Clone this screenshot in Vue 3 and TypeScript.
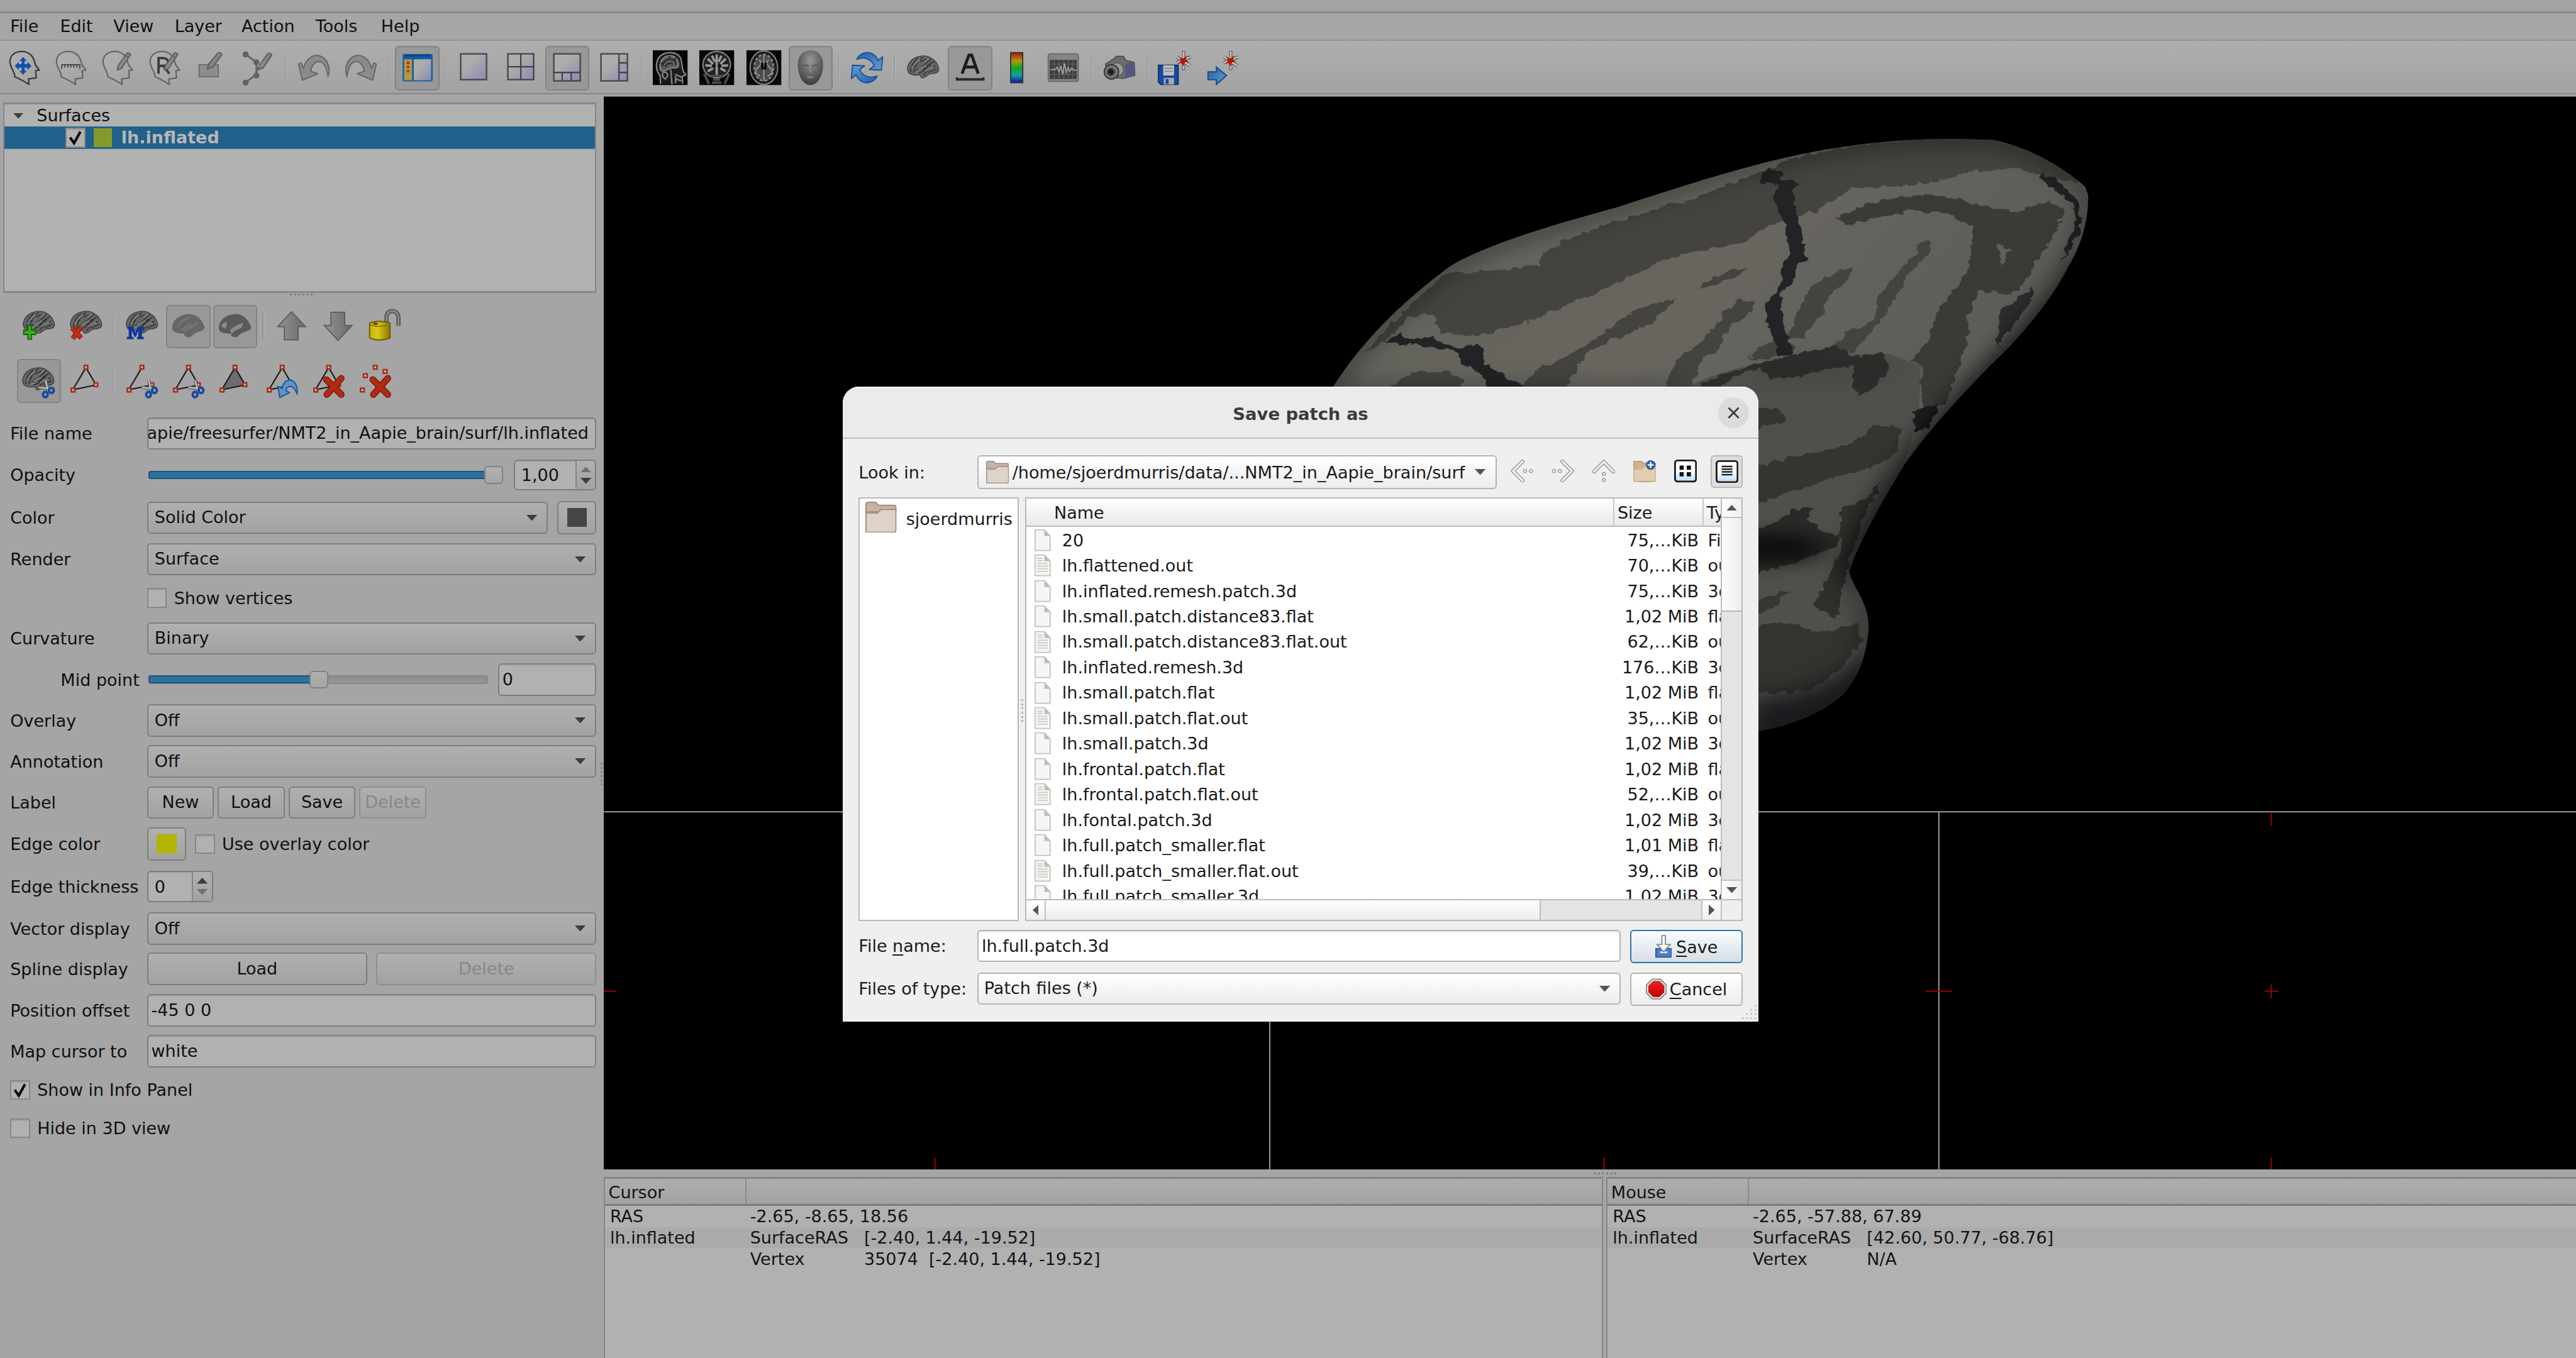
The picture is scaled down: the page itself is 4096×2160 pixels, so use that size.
<script setup lang="ts">
interface FileRow { name: string; size: string; type: string; text?: boolean }
interface Tool { icon?: string; on?: boolean; sep?: boolean }

const menus = [
  { label: 'File', w: 83 }, { label: 'Edit', w: 89 }, { label: 'View', w: 102 },
  { label: 'Layer', w: 111.5 }, { label: 'Action', w: 123.5 }, { label: 'Tools', w: 109 },
  { label: 'Help', w: 100 },
]

const sep: Tool = { sep: true }
const tools: Tool[] = [
  { icon: 'nav' }, { icon: 'ruler' }, { icon: 'headpen' }, { icon: 'recon' }, { icon: 'boxpen' }, { icon: 'spline' }, sep,
  { icon: 'undo' }, { icon: 'redo' }, sep,
  { icon: 'panel', on: true }, sep,
  { icon: 'one' }, { icon: 'four' }, { icon: 'onethree', on: true }, { icon: 'oneside' }, sep,
  { icon: 'sag' }, { icon: 'cor' }, { icon: 'axi' }, { icon: 'face', on: true }, sep,
  { icon: 'refresh' }, sep,
  { icon: 'brain' }, { icon: 'annot', on: true }, { icon: 'cbar' }, { icon: 'graph' }, sep,
  { icon: 'camera' }, sep,
  { icon: 'savept' }, { icon: 'gotopt' },
]
const surfTools: Tool[] = [
  { icon: 'badd' }, { icon: 'bdel' }, sep,
  { icon: 'bm' }, { icon: 'bsmooth', on: true }, { icon: 'binfl', on: true }, sep,
  { icon: 'up' }, { icon: 'down' }, { icon: 'lock' },
]
const pathTools: Tool[] = [
  { icon: 'bcut', on: true }, { icon: 'tri' }, sep,
  { icon: 'tricutopen' }, { icon: 'tricut' }, { icon: 'trifill' }, { icon: 'triundo' }, { icon: 'tridel' }, { icon: 'dotsdel' },
]

const files: FileRow[] = [
  { name: '20', size: '75,…KiB', type: 'File' },
  { name: 'lh.flattened.out', size: '70,…KiB', type: 'out', text: true },
  { name: 'lh.inflated.remesh.patch.3d', size: '75,…KiB', type: '3d' },
  { name: 'lh.small.patch.distance83.flat', size: '1,02 MiB', type: 'flat' },
  { name: 'lh.small.patch.distance83.flat.out', size: '62,…KiB', type: 'out', text: true },
  { name: 'lh.inflated.remesh.3d', size: '176…KiB', type: '3d' },
  { name: 'lh.small.patch.flat', size: '1,02 MiB', type: 'flat' },
  { name: 'lh.small.patch.flat.out', size: '35,…KiB', type: 'out', text: true },
  { name: 'lh.small.patch.3d', size: '1,02 MiB', type: '3d' },
  { name: 'lh.frontal.patch.flat', size: '1,02 MiB', type: 'flat' },
  { name: 'lh.frontal.patch.flat.out', size: '52,…KiB', type: 'out', text: true },
  { name: 'lh.fontal.patch.3d', size: '1,02 MiB', type: '3d' },
  { name: 'lh.full.patch_smaller.flat', size: '1,01 MiB', type: 'flat' },
  { name: 'lh.full.patch_smaller.flat.out', size: '39,…KiB', type: 'out', text: true },
  { name: 'lh.full.patch_smaller.3d', size: '1,02 MiB', type: '3d' },
]

const info = [
  { title: 'Cursor', ras: '-2.65, -8.65, 18.56', sras: '[-2.40, 1.44, -19.52]', vertex: '35074  [-2.40, 1.44, -19.52]' },
  { title: 'Mouse', ras: '-2.65, -57.88, 67.89', sras: '[42.60, 50.77, -68.76]', vertex: 'N/A' },
]
</script>

<template>
  <div class="app">
    <!-- icon sheet -->
    <svg class="sheet" width="0" height="0">
      <defs>
        <linearGradient id="gHead" x1="0" y1="0" x2="1" y2="1"><stop offset="0" stop-color="#b2b2b2" /><stop offset="1" stop-color="#a2a2a2" /></linearGradient>
        <linearGradient id="gPane" x1="0" y1="0" x2="1" y2="1"><stop offset=".35" stop-color="#adadad" /><stop offset="1" stop-color="#8a8ab4" /></linearGradient>
        <linearGradient id="gArr" x1="0" y1="0" x2="1" y2="0"><stop offset="0" stop-color="#939393" /><stop offset="1" stop-color="#6a6a6a" /></linearGradient>
        <linearGradient id="gBlue" x1="0" y1="0" x2="1" y2="1"><stop offset="0" stop-color="#1c5fa8" /><stop offset="1" stop-color="#6c9ccc" /></linearGradient>
        <linearGradient id="gRain" x1="0" y1="0" x2="0" y2="1"><stop offset="0" stop-color="#b01010" /><stop offset=".28" stop-color="#b09a10" /><stop offset=".5" stop-color="#10a818" /><stop offset=".75" stop-color="#10a0a0" /><stop offset="1" stop-color="#1010b0" /></linearGradient>
        <linearGradient id="gLock" x1="0" y1="0" x2="1" y2="0"><stop offset="0" stop-color="#c8b400" /><stop offset=".4" stop-color="#d8c820" /><stop offset="1" stop-color="#8a7400" /></linearGradient>
        <linearGradient id="gRed" x1="0" y1="0" x2="0" y2="1"><stop offset="0" stop-color="#ef2020" /><stop offset="1" stop-color="#c00000" /></linearGradient>
        <linearGradient id="gWB" x1="0" y1="0" x2="0" y2="1"><stop offset=".5" stop-color="#fff" /><stop offset="1" stop-color="#b8dcff" /></linearGradient>
        <radialGradient id="gFace" cx=".5" cy=".3" r=".7"><stop offset="0" stop-color="#989898" /><stop offset="1" stop-color="#3c3c3c" /></radialGradient>
        <radialGradient id="gLens"><stop offset="0" stop-color="#15154a" /><stop offset=".5" stop-color="#222" /><stop offset="1" stop-color="#777" /></radialGradient>
      </defs>

      <symbol id="s-head" viewBox="0 0 60 60">
        <path d="M14 45C15 37 6 31 6 19 7 8 16 3 26 3 39 3 45 12 47 20L49 26 55 34 49 35 50 47 37 49 38 58C32 54 25 50 14 45Z" fill="url(#gHead)" stroke="currentColor" stroke-width="2.4" stroke-linejoin="round" />
      </symbol>
      <symbol id="s-pencil" viewBox="0 0 60 60">
        <path d="M30 34L31 27 46 6Q49 4 52 8L37 31Z" fill="#8a8a8a" stroke="#5c5c5c" stroke-width="2" stroke-linejoin="round" /><path d="M44 10L49 14" stroke="#606060" stroke-width="2" />
      </symbol>
      <symbol id="i-nav" viewBox="0 0 60 60">
        <use href="#s-head" color="#383838" />
        <path d="M28 12L34 19H30.500V24H35V20.500L42 27 35 34V30H30.500V35H34L28 42 22 35H25.500V30H21V34L14 27 21 20.500V24H25.500V19H22Z" fill="#1150a8" />
      </symbol>
      <symbol id="i-ruler" viewBox="0 0 60 60"><use href="#s-head" color="#666" /><path d="M15 32V25H45V32M20 25V30M25 25V30M30 25V30M35 25V30M40 25V30" fill="none" stroke="#444" stroke-width="2" /></symbol>
      <symbol id="i-headpen" viewBox="0 0 60 60"><use href="#s-head" color="#666" /><use href="#s-pencil" /></symbol>
      <symbol id="i-recon" viewBox="0 0 60 60"><use href="#s-head" color="#666" /><path d="M20 40V14H28Q36 15 36 21 36 27 28 27H20M28 27L38 40" fill="none" stroke="#3c3c3c" stroke-width="4" /><use href="#s-pencil" /></symbol>
      <symbol id="i-boxpen" viewBox="0 0 60 60"><path d="M10 25H42V45H10Z" fill="#8e8e8e" stroke="#6c6c6c" stroke-width="2" /><path d="M24 32L26 24 41 6Q45 3 48 8L33 29Z" fill="#858585" stroke="#5c5c5c" stroke-width="2" /></symbol>
      <symbol id="i-spline" viewBox="0 0 60 60"><path d="M9 8L27 21 27 41 9 55M28 34L32 27 46 7Q50 5 52 9L38 30Z" fill="none" stroke="#636363" stroke-width="3" /><path d="M32 30L49 8" stroke="#858585" stroke-width="4" /><g fill="#626262"><circle cx="9" cy="8" r="5" /><circle cx="27" cy="21" r="5" /><circle cx="27" cy="43" r="5" /><circle cx="9" cy="55" r="5" /></g></symbol>
      <symbol id="i-undo" viewBox="0 0 60 60"><path d="M4 24L8 22 12 31C17 14 28 8 38 10 52 13 58 31 53 45 51 31 47 20 38 20 30 20 25 28 24 36L36 40 10 51Z" fill="#8b8b8b" stroke="#646464" stroke-width="2" stroke-linejoin="round" /></symbol>
      <symbol id="i-redo" viewBox="0 0 60 60"><g transform="matrix(-1 0 0 1 60 0)"><use href="#i-undo" width="60" height="60" /></g></symbol>
      <symbol id="i-panel" viewBox="0 0 60 60"><rect x="5.500" y="7" width="50" height="46" rx="3" fill="#0f5fa0" /><rect x="8" y="16" width="13" height="35" fill="#b09a48" /><rect x="24" y="16" width="29" height="35" fill="url(#gPane)" /><path d="M14.500 20V41" stroke="#b03c10" stroke-width="5" stroke-dasharray="4 3" /><path d="M9 10H52" stroke="#0a3d80" stroke-width="2" /></symbol>
      <symbol id="i-one" viewBox="0 0 60 60"><rect x="9" y="7" width="43" height="43" fill="url(#gPane)" stroke="#444" stroke-width="2.400" /></symbol>
      <symbol id="i-four" viewBox="0 0 60 60"><path d="M9 7H52V50H9ZM30.500 7V50M9 28.500H52" fill="url(#gPane)" stroke="#444" stroke-width="2.400" /></symbol>
      <symbol id="i-onethree" viewBox="0 0 60 60"><path d="M8 7H52V52H8ZM8 38H52M22 38V52M37 38V52" fill="url(#gPane)" stroke="#444" stroke-width="2.400" /></symbol>
      <symbol id="i-oneside" viewBox="0 0 60 60"><path d="M8 7H52V52H8ZM38 7V52M38 22H52M38 38H52" fill="url(#gPane)" stroke="#444" stroke-width="2.400" /></symbol>
      <symbol id="i-sag" viewBox="0 0 60 60"><rect x="1" y="1" width="58" height="58" fill="#050505" /><path d="M14 57L13 43C5 34 5 20 13 11 23 2 40 3 47 13 50 19 49 29 52 36L56 42 50 45 51 57" fill="#1c1c1c" stroke="#8c8c8c" stroke-width="2.200" /><path d="M13 30C12 18 20 10 29 10 39 10 45 18 44 27 41 33 36 29 30 31L22 35C16 37 13 35 13 30Z" fill="#5c5c5c" stroke="#888" stroke-width="2" /><path d="M17 28Q20 16 30 16T39 25M22 29Q25 20 34 24M19 21L14 24M29 16V10M36 18L40 14" fill="none" stroke="#262626" stroke-width="2.200" /><path d="M18 38Q25 36 26 43L22 49Q15 45 18 38M31 33L33 58M38 41L49 46M39 49L49 52M39 56V44" fill="none" stroke="#808080" stroke-width="2.500" /></symbol>
      <symbol id="i-cor" viewBox="0 0 60 60"><rect x="1" y="1" width="58" height="58" fill="#050505" /><ellipse cx="30" cy="25" rx="23" ry="22" fill="#222" stroke="#858585" stroke-width="2.200" /><path d="M30 8V42M15 15L24 24M45 15L36 24M11 26L22 27M49 26L38 27M15 36L24 31M45 36L36 31M22 10L27 20M38 10L33 20" stroke="#999" stroke-width="4" /><path d="M24 24L28 28M36 24L32 28" stroke="#111" stroke-width="3" /><path d="M9 40L17 57M51 40L43 57M20 44H40M24 50H36M22 55H38" stroke="#4c4c4c" stroke-width="4" /></symbol>
      <symbol id="i-axi" viewBox="0 0 60 60"><rect x="1" y="1" width="58" height="58" fill="#050505" /><ellipse cx="30" cy="30" rx="23" ry="28" fill="#1b1b1b" stroke="#808080" stroke-width="2.200" /><ellipse cx="30" cy="30" rx="16" ry="22" fill="#4c4c4c" stroke="#848484" stroke-width="3" stroke-dasharray="5 3" /><path d="M30 8V52M22 17Q29 22 20 30T24 44M38 17Q31 22 40 30T36 44" fill="none" stroke="#909090" stroke-width="2.200" /><path d="M27 22L28 33M33 22L32 33" stroke="#060606" stroke-width="4" /></symbol>
      <symbol id="i-face" viewBox="0 0 60 60"><path d="M30 1C44 1 51 12 51 25 51 44 42 59 30 59S9 44 9 25C9 12 16 1 30 1Z" fill="url(#gFace)" /><path d="M17 27Q22 24 27 28M33 28Q38 24 43 27" stroke="#555" stroke-width="2" fill="none" /><path d="M30 27V39M25 46H35" stroke="#858585" stroke-width="3" /></symbol>
      <symbol id="i-refresh" viewBox="0 0 60 60"><path id="halfRefresh" d="M13 16C18 5 33 1 43 10 47 14 48 18 48 18L56 12 54 34 34 33 42 27C38 16 26 11 13 16Z" fill="url(#gBlue)" stroke="#14549a" stroke-width="2" stroke-linejoin="round" /><use href="#halfRefresh" transform="rotate(180 30 30)" /></symbol>
      <symbol id="i-brain" viewBox="0 0 60 60">
        <path d="M4 33C4 26 8 18 16 14 25 9 38 9 45 15 52 19 57 28 56 35 54 40 48 39 43 40 36 42 34 48 28 47 25 46 27 43 24 42 17 43 9 42 6 38Z" fill="#666" stroke="#3f3f3f" stroke-width="1.500" />
        <path d="M9 37Q11 22 22 14M15 38Q15 24 30 12M19 34L32 26 43 15M22 39Q34 37 38 26L48 20M31 43Q38 32 51 27M39 38L53 32M25 20L36 16M12 28L20 26M30 33L43 25" fill="none" stroke="#333" stroke-width="1.800" /><path d="M11 32Q17 22 25 16M22 33L35 26M33 36L47 29M18 38L23 36M33 20L40 15" stroke="#8e8e8e" stroke-width="1.800" fill="none" />
      </symbol>
      <symbol id="i-annot" viewBox="0 0 60 60"><path d="M16.500 40L28 9H32.500L43.500 40M21 29H39" fill="none" stroke="#1c1c1c" stroke-width="5" /><path d="M8 46V49.500H52V46" fill="none" stroke="#2a2a2a" stroke-width="4" /></symbol>
      <symbol id="i-cbar" viewBox="0 0 60 60"><rect x="20" y="5" width="20" height="50" fill="url(#gRain)" stroke="#333" stroke-width="2" /></symbol>
      <symbol id="i-graph" viewBox="0 0 60 60"><rect x="5" y="7" width="50" height="46" rx="3" fill="#858585" stroke="#6a6a6a" stroke-width="2" /><rect x="7.500" y="17" width="45" height="32" fill="#3e3e3e" /><path d="M8 24H52M8 41H52M15 17V49M23 17V49M31 17V49M39 17V49M46 17V49" stroke="#606060" stroke-width="1.500" /><path d="M9 33H17L20 29 23 37 26 27 29 41 32 23 35 38 38 30 41 36 44 31 47 34H52" stroke="#a0a0a0" fill="none" stroke-width="2" /></symbol>
      <symbol id="i-camera" viewBox="0 0 60 60"><path d="M6 24L20 15 24 11H36L40 18 54 21 55 43 36 48 10 46Z" fill="#6b6b6b" stroke="#444" stroke-width="1.500" /><path d="M39 24L54 20 55 43 40 48Z" fill="#565680" /><circle cx="25" cy="33" r="11" fill="#999" stroke="#444" /><circle cx="16" cy="37" r="12" fill="#777" stroke="#333" stroke-width="2" /><circle cx="15" cy="37" r="8" fill="url(#gLens)" /></symbol>
      <symbol id="s-target" viewBox="0 0 60 60"><path d="M43 2V34M31 22L55 12M32 12L54 27" stroke="#444" stroke-width="5" /><path d="M43 3V33M31 22L55 12M32 12L54 27" stroke="#c4c4c4" stroke-width="3" /><path d="M36 13L42 15 48 10 47 17 52 21 45 21 43 28 39 22 34 24 38 18Z" fill="#b3170c" /></symbol>
      <symbol id="i-savept" viewBox="0 0 60 60"><use href="#s-target" /><path d="M1 26H34V58H5L1 54Z" fill="#164a9a" stroke="#0d3575" stroke-width="2" /><rect x="9" y="26" width="18" height="17" fill="#c0c0c0" /><path d="M11 31H25M11 36H25" stroke="#888" stroke-width="2" /><rect x="10" y="47" width="17" height="11" fill="#a9a9a9" /><rect x="13" y="49" width="5" height="8" fill="#164a9a" /></symbol>
      <symbol id="i-gotopt" viewBox="0 0 60 60"><use href="#s-target" /><path d="M5 37H19V29L36 43 19 58V50H5Z" fill="url(#gBlue)" stroke="#124c90" stroke-width="2" /></symbol>

      <symbol id="s-plus" viewBox="0 0 60 60"><path d="M12 29H18V37H25V44H18V52H12V44H5V37H12Z" fill="#39b01c" stroke="#146408" stroke-width="2" /></symbol>
      <symbol id="i-badd" viewBox="0 0 60 60"><g transform="translate(0 -5)"><use href="#i-brain" width="60" height="60" /></g><use href="#s-plus" /></symbol>
      <symbol id="i-bdel" viewBox="0 0 60 60"><g transform="translate(0 -5)"><use href="#i-brain" width="60" height="60" /></g><path d="M7 33L22 50M22 31L8 51" stroke="#7e1405" stroke-width="8" /><path d="M7 33L22 50M22 31L8 51" stroke="#c42c12" stroke-width="5.500" /></symbol>
      <symbol id="i-bm" viewBox="0 0 60 60"><g transform="translate(0 -5)"><use href="#i-brain" width="60" height="60" /></g><path d="M6 31H15L19 41 24 31H33V35H30V48H33V52H22V48H24V38L20 48H18L13 38V48H16V52H5V48H8V35H6Z" fill="#10359c" /></symbol>
      <symbol id="i-bsmooth" viewBox="0 0 60 60"><path d="M3 32C4 20 15 10 32 10 46 11 53 21 57 32 57 38 47 39 41 42L32 49 24 47 23 43C10 42 2 40 3 32Z" fill="#666" /><path d="M12 32Q17 20 31 16M23 38Q36 32 46 24M17 37L34 27" stroke="#777" stroke-width="3" fill="none" /></symbol>
      <symbol id="i-binfl" viewBox="0 0 60 60"><path d="M3 32C4 20 15 10 32 10 46 11 53 21 57 32 57 38 47 39 41 42L32 49 24 47 23 43C10 42 2 40 3 32Z" fill="#5a5a5a" /><path d="M7 30Q12 22 17 24L14 35ZM22 36L34 28 44 24 41 33 29 38 24 44Z" fill="#8a8a8a" /></symbol>
      <symbol id="i-up" viewBox="0 0 60 60"><path d="M30 6L53 31H41V53H18V31H7Z" fill="url(#gArr)" stroke="#5e5e5e" stroke-width="2" /></symbol>
      <symbol id="i-down" viewBox="0 0 60 60"><path d="M30 54L53 29H41V7H18V29H7Z" fill="url(#gArr)" stroke="#5e5e5e" stroke-width="2" /></symbol>
      <symbol id="i-lock" viewBox="0 0 60 60"><path d="M33 24V15Q34 5 43 5 53 6 53 17V30" fill="none" stroke="#555" stroke-width="7" /><path d="M33 24V15Q34 5 43 5 53 6 53 17V30" fill="none" stroke="#8b8b8b" stroke-width="3" /><path d="M5 25Q20 19 39 25V50Q22 57 5 50Z" fill="url(#gLock)" stroke="#6b5a00" stroke-width="2" /><path d="M5 28Q20 33 39 28" stroke="#8c7800" stroke-width="2" fill="none" /><ellipse cx="15" cy="26" rx="4" ry="2" fill="#5a4a00" /></symbol>

      <symbol id="s-scis" viewBox="0 0 60 60"><path d="M41 29L46 47M30 41L47 43" stroke="#555" stroke-width="5" /><path d="M41 29L46 47M30 41L47 43" stroke="#c2c2c2" stroke-width="2.500" /><g fill="none" stroke="#164c9a" stroke-width="4"><ellipse cx="41" cy="53" rx="4" ry="4.500" /><ellipse cx="51" cy="46" rx="4" ry="4.500" /></g></symbol>
      <symbol id="i-bcut" viewBox="0 0 60 60"><g transform="translate(-1 -2)"><use href="#i-brain" width="60" height="60" /></g><use href="#s-scis" /></symbol>
      <symbol id="s-sq" viewBox="0 0 60 60"><rect x="1.500" y="1.500" width="6" height="6" fill="#bbb" stroke="#a82c12" stroke-width="2.600" /></symbol>
      <symbol id="s-x" viewBox="0 0 60 60"><path d="M26 28L51 53M51 26L27 53" stroke="#761005" stroke-width="11" stroke-linecap="round" /><path d="M26 28L51 53M51 26L27 53" stroke="#b02a15" stroke-width="8.500" stroke-linecap="round" /></symbol>
      <symbol id="i-tri" viewBox="0 0 60 60"><path d="M30 8L8 45 47 37Z" fill="none" stroke="#1a1a1a" stroke-width="2.200" /><use href="#s-sq" x="25.500" y="3" width="60" height="60" /><use href="#s-sq" x="4" y="41" width="60" height="60" /><use href="#s-sq" x="42" y="32" width="60" height="60" /></symbol>
      <symbol id="i-tricutopen" viewBox="0 0 60 60"><path d="M30 8L8 45 47 37" fill="none" stroke="#1a1a1a" stroke-width="2.200" /><use href="#s-sq" x="25.500" y="3" width="60" height="60" /><use href="#s-sq" x="4" y="41" width="60" height="60" /><use href="#s-sq" x="42" y="32" width="60" height="60" /><use href="#s-scis" /></symbol>
      <symbol id="i-tricut" viewBox="0 0 60 60"><use href="#i-tri" /><use href="#s-scis" /></symbol>
      <symbol id="i-trifill" viewBox="0 0 60 60"><path d="M30 8L8 45 47 37Z" fill="#6d6d6d" /><use href="#i-tri" /></symbol>
      <symbol id="i-triundo" viewBox="0 0 60 60"><use href="#i-tri" /><path d="M55 53C57 36 49 28 41 29 33 30 31 37 30 43L23 39 26 58 42 50 36 46C39 37 50 36 55 53Z" fill="#5c93c8" stroke="#1b5898" stroke-width="2" /></symbol>
      <symbol id="i-tridel" viewBox="0 0 60 60"><use href="#i-tri" /><use href="#s-x" /></symbol>
      <symbol id="i-dotsdel" viewBox="0 0 60 60"><use href="#s-sq" x="25.500" y="3" width="60" height="60" /><use href="#s-sq" x="42" y="10" width="60" height="60" /><use href="#s-sq" x="9" y="17" width="60" height="60" /><use href="#s-sq" x="4" y="41" width="60" height="60" /><use href="#s-x" /></symbol>

      <symbol id="i-folder" viewBox="0 0 52 52"><path d="M1 51V4Q1 1 4 1H17L22 6H48Q51 6 51 9V17H1" fill="#c8b4a5" stroke="#a08c7c" stroke-width="2" /><path d="M1 51V19H20L26 13H51V47Q51 51 47 51Z" fill="#ddd3c9" stroke="#a08c7c" stroke-width="2" /></symbol>
      <symbol id="i-file" viewBox="0 0 30 38"><path d="M2 1H18L28 12V37H2Z" fill="#f5f5f3" stroke="#c3c3bd" stroke-width="2" stroke-linejoin="round" /><path d="M18 1V12H28Z" fill="#bdbdb7" /></symbol>
      <symbol id="i-text" viewBox="0 0 30 38"><use href="#i-file" width="30" height="38" /><path d="M6 7H15M6 11H15M6 16H24M6 20.500H24M6 25H24M6 29.500H24" stroke="#cbcbc6" stroke-width="2" /></symbol>
      <symbol id="i-back" viewBox="0 0 38 38"><path d="M20 3L4 19 20 35" fill="none" stroke="#a0a0a0" stroke-width="6.500" stroke-linecap="round" /><path d="M20 3L4 19 20 35" fill="none" stroke="#f4f4f4" stroke-width="3" stroke-linecap="round" /><circle cx="24" cy="19" r="2.500" fill="#fff" stroke="#a0a0a0" stroke-width="1.800" /><circle cx="34" cy="19" r="2.500" fill="#fff" stroke="#a0a0a0" stroke-width="1.800" /></symbol>
      <symbol id="tri-down" viewBox="0 0 18 10"><path d="M0 0H18L9 10Z" fill="currentColor" /></symbol>
    </svg>

    <div class="strip"></div>
    <nav class="menubar"><span v-for="m in menus" :key="m.label" :style="{ width: m.w + 'px' }">{{ m.label }}</span></nav>
    <div class="toolbar">
      <template v-for="(t, i) in tools" :key="i">
        <i v-if="t.sep" class="tsep"></i>
        <span v-else class="tool" :class="{ on: t.on }"><svg viewBox="0 0 60 60"><use :href="'#i-' + t.icon" /></svg></span>
      </template>
    </div>

    <div class="main">
      <aside class="side">
        <div class="tree">
          <div class="trow"><svg class="tarrow" viewBox="0 0 18 10"><use href="#tri-down" /></svg>Surfaces</div>
          <div class="trow sel"><i class="cb on"><svg viewBox="0 0 30 30"><path d="M6 15L13 25 24 5" fill="none" stroke="#080808" stroke-width="4.500" /></svg></i><i class="sw"></i><b>lh.inflated</b></div>
        </div>
        <div class="dots hz t"></div>
        <div class="tools2 first">
          <template v-for="(t, i) in surfTools" :key="i">
            <i v-if="t.sep" class="tsep"></i>
            <span v-else class="tool" :class="{ on: t.on }"><svg viewBox="0 0 60 60"><use :href="'#i-' + t.icon" /></svg></span>
          </template>
        </div>
        <div class="tools2">
          <template v-for="(t, i) in pathTools" :key="i">
            <i v-if="t.sep" class="tsep"></i>
            <span v-else class="tool" :class="{ on: t.on }"><svg viewBox="0 0 60 60"><use :href="'#i-' + t.icon" /></svg></span>
          </template>
        </div>

        <div class="form">
          <div class="row"><label>File name</label><div class="field path"><span>apie/freesurfer/NMT2_in_Aapie_brain/surf/lh.inflated</span></div></div>
          <div class="row"><label>Opacity</label>
            <div class="slider s1"><i class="fill"></i><i class="knob"></i></div>
            <div class="spin w138"><span>1,00</span><div class="ud"><svg class="dim" viewBox="0 0 18 10"><path d="M0 10H18L9 0Z" fill="currentColor" /></svg><svg viewBox="0 0 18 10"><use href="#tri-down" /></svg></div></div>
          </div>
          <div class="row"><label>Color</label><div class="combo w668"><span>Solid Color</span><svg viewBox="0 0 18 10"><use href="#tri-down" /></svg></div><div class="btn color end"><i class="grey"></i></div></div>
          <div class="row"><label>Render</label><div class="combo"><span>Surface</span><svg viewBox="0 0 18 10"><use href="#tri-down" /></svg></div></div>
          <div class="row"><label></label><i class="cb"></i><span class="cbt">Show vertices</span></div>
          <div class="row"><label>Curvature</label><div class="combo"><span>Binary</span><svg viewBox="0 0 18 10"><use href="#tri-down" /></svg></div></div>
          <div class="row"><label class="ind">Mid point</label><div class="slider s2"><i class="fill"></i><i class="knob"></i></div><div class="field w164">0</div></div>
          <div class="row"><label>Overlay</label><div class="combo"><span>Off</span><svg viewBox="0 0 18 10"><use href="#tri-down" /></svg></div></div>
          <div class="row"><label>Annotation</label><div class="combo"><span>Off</span><svg viewBox="0 0 18 10"><use href="#tri-down" /></svg></div></div>
          <div class="row g6"><label>Label</label><div class="btn w112">New</div><div class="btn w112">Load</div><div class="btn w112">Save</div><div class="btn w112 off">Delete</div></div>
          <div class="row"><label>Edge color</label><div class="btn color"><i class="yel"></i></div><i class="cb ml"></i><span class="cbt">Use overlay color</span></div>
          <div class="row"><label>Edge thickness</label><div class="spin w110"><span>0</span><div class="ud"><svg viewBox="0 0 18 10"><path d="M0 10H18L9 0Z" fill="currentColor" /></svg><svg class="dim" viewBox="0 0 18 10"><use href="#tri-down" /></svg></div></div></div>
          <div class="row"><label>Vector display</label><div class="combo"><span>Off</span><svg viewBox="0 0 18 10"><use href="#tri-down" /></svg></div></div>
          <div class="row g15"><label>Spline display</label><div class="btn grow">Load</div><div class="btn grow off">Delete</div></div>
          <div class="row"><label>Position offset</label><div class="field">-45 0 0</div></div>
          <div class="row"><label>Map cursor to</label><div class="field">white</div></div>
          <div class="row"><i class="cb on"><svg viewBox="0 0 30 30"><path d="M6 15L13 25 24 5" fill="none" stroke="#080808" stroke-width="4.500" /></svg></i><span class="cbt">Show in Info Panel</span></div>
          <div class="row"><i class="cb"></i><span class="cbt">Hide in 3D view</span></div>
        </div>
        <div class="dots vt"></div>
      </aside>

      <section class="right">
        <svg class="view" viewBox="1006 160 3287 1790">
          <defs>
            <clipPath id="hemi"><path id="hemiPath" d="M30 730C70 640 140 530 265 415 300 380 400 330 600 265 750 205 900 145 1040 121 1150 100 1250 100 1335 104 1400 120 1465 162 1515 215L1521 235C1522 300 1505 360 1480 410 1450 480 1400 560 1330 640 1270 715 1205 800 1160 880 1110 980 1070 1070 1055 1130 1060 1165 1095 1205 1093 1265 1090 1310 1080 1375 1040 1425 990 1475 930 1500 860 1512L600 1400 300 1000Z" /></clipPath>
            <filter id="jag" x="-5%" y="-5%" width="110%" height="110%" color-interpolation-filters="sRGB"><feTurbulence type="fractalNoise" baseFrequency=".06" numOctaves="2" seed="4" /><feDisplacementMap in="SourceGraphic" scale="18" xChannelSelector="R" yChannelSelector="G" /></filter>
            <filter id="soft" x="-50%" y="-50%" width="200%" height="200%" color-interpolation-filters="sRGB"><feGaussianBlur stdDeviation="22" /></filter>
            <linearGradient id="gLight" x1="0" y1="0" x2="1" y2=".7"><stop offset="0" stop-color="#5f5e58" /><stop offset=".45" stop-color="#68665f" /><stop offset=".75" stop-color="#5c5b57" /><stop offset="1" stop-color="#3a3a39" /></linearGradient>
          </defs>
          <rect x="1006" y="160" width="3287" height="1790" fill="#000" />
          <g transform="translate(2180 160) scale(.8546 .7015)">
            <g clip-path="url(#hemi)">
              <rect x="0" y="90" width="1540" height="1440" fill="url(#gLight)" />
              <path d="M740 690C830 640 900 620 1130 612L1195 640 1190 760 1160 880 1055 1130 1093 1265 1040 1425 860 1512 700 1400Z" fill="#504f4c" />
              <g filter="url(#jag)" fill="#44433f">
                <path d="M270 422L380 412 450 402 462 372C520 325 600 295 760 240 850 195 880 182 925 158 1000 125 1150 95 1300 92 1400 95 1480 150 1520 205L1445 196 1390 172 1340 172 1280 184 1220 203 1150 214 1060 218 1010 258 980 277 940 292 900 307 850 348 760 368 690 393 640 423 560 468 500 498 430 533 370 558 330 570 260 563 245 518 200 523 150 583 110 610C170 530 220 470 270 422Z" />
                <path d="M760 457L800 422 857 404 832 432 782 452Z" />
                <path d="M718 482L690 517 640 557 590 582 550 602 520 652 500 692 405 710 450 645 500 622 540 592 580 562 610 527 660 497Z" />
                <path d="M868 487L865 512 820 552 800 602 770 622 745 700 690 705 720 622 760 592 800 542 810 512 840 484Z" />
                <path d="M1060 407L1055 437 1015 477 1000 522 965 572 930 577 960 502 980 452 1030 417Z" />
                <path d="M1215 347L1210 377 1165 432 1145 482 1110 542 1075 592 1060 612 1020 597 1050 562 1100 537 1110 482 1140 432 1180 382 1195 347Z" />
                <path d="M860 625L880 595 930 575 950 600 900 625Z" />
                <path d="M150 700L200 658 270 655 300 675 300 700Z" />
                <path d="M880 880C950 850 1030 840 1060 825L1100 782 1160 787 1145 850 1100 882 1020 907 940 942 870 970Z" fill="#353430" />
                <path d="M870 738L925 747 932 772 870 790Z" fill="#353430" />
                <path d="M1120 912L1080 1012 1055 1102 1030 1245 985 1207 1010 1152 1040 1082 1040 977 1080 962Z" fill="#2f2f2c" />
                <path d="M870 1202L940 1172 910 1217 870 1230Z" fill="#363632" />
                <path d="M870 1262L940 1250 1000 1277 1070 1252 1080 1290 1040 1362 980 1412 870 1420Z" fill="#33332f" />
              </g>
              <g filter="url(#jag)">
                <path d="M1030 287L1080 262 1130 242 1220 234 1290 252 1330 267 1380 272 1445 250 1475 272 1460 322 1430 372 1400 432 1370 472 1310 462 1285 522 1290 562 1270 642 1240 735 1200 742 1195 692 1200 642 1175 627 1210 582 1230 502 1270 452 1290 402 1295 312 1250 277 1170 272 1110 292 1050 305ZM1345 352L1352 405 1370 362Z" fill="#3b3a37" />
                <path d="M750 692C800 662 860 642 890 632L960 610 1030 595 1060 617 1125 612 1132 652 1100 692 1075 717 1060 682 1065 642 1020 647 960 667 900 672 880 645 830 665 800 700Z" fill="#2e2e2d" />
                <path d="M985 977L975 1002 1000 1032 1040 1042 1030 1072 950 1107 870 1135V1032L920 1012 940 982Z" fill="#2a2a28" />
                <path d="M1180 750L1230 730 1210 790 1185 800Z" fill="#1d1d1f" />
                <path d="M1350 510L1415 455 1410 490 1340 600Z" fill="#2d2d2d" />
                <g fill="#222325">
                  <path d="M900 172L924 180 915 195 958 205 942 227 955 277 970 387 950 402 950 432 920 472 925 532 945 615 915 617 905 562 893 542 895 492 920 452 925 402 940 377 930 312 920 282 907 242 918 214 880 202 885 180Z" />
                  <path d="M180 562L185 572 245 575 300 600 330 585 342 605 345 640 390 670 430 695 350 697 340 658 295 632 290 607 220 592 150 585Z" />
                  <path d="M1434 180L1480 220 1503 250 1507 320 1470 392 1478 355 1497 310 1490 257 1425 192Z" />
                </g>
              </g>
              <g filter="url(#soft)">
                <use href="#hemiPath" fill="none" stroke="#000" stroke-width="36" opacity=".35" />
                <path d="M1540 400C1440 560 1260 760 1180 900 1110 1020 1080 1090 1075 1140" fill="none" stroke="#000" stroke-width="70" opacity=".6" />
                <ellipse cx="900" cy="1075" rx="110" ry="32" opacity=".75" />
                <path d="M860 670H1130L1150 640 900 620Z" opacity=".12" />
                <path d="M860 1430C960 1420 1040 1390 1080 1320L1120 1400 980 1540H860Z" fill="#101215" opacity=".8" />
                <path d="M40 720H720V680H60Z" opacity=".25" />
              </g>
            </g>
          </g>
          <g fill="#9e9e9e">
            <rect x="1006" y="1352" width="3287" height="2" />
            <rect x="2115" y="1353" width="2" height="597" /><rect x="3230" y="1353" width="2" height="597" />
          </g>
          <g fill="#a50000">
            <rect x="1006" y="1651" width="21" height="2" /><rect x="1557" y="1929" width="2" height="21" /><rect x="2672" y="1929" width="2" height="21" /><rect x="3784" y="1929" width="2" height="21" />
            <rect x="3784" y="1355" width="2" height="21" /><rect x="3209" y="1651" width="44" height="2" /><rect x="3774" y="1651" width="23" height="2" /><rect x="3784" y="1641" width="2" height="23" />
          </g>
          <rect x="1006" y="160" width="3287" height="1" fill="#666" />
        </svg>
        <div class="dots hz b"></div>
        <div class="infos">
          <div v-for="p in info" :key="p.title" class="info" :class="p.title.toLowerCase()">
            <div class="ih"><span>{{ p.title }}</span><i></i></div>
            <div class="ir"><span>RAS</span><span>{{ p.ras }}</span></div>
            <div class="ir alt"><span>lh.inflated</span><span class="k">SurfaceRAS</span><span>{{ p.sras }}</span></div>
            <div class="ir"><span></span><span class="k">Vertex</span><span>{{ p.vertex }}</span></div>
          </div>
        </div>
      </section>
    </div>

    <div class="dialog">
      <div class="title"><b>Save patch as</b><i class="close"><svg viewBox="0 0 20 20"><path d="M1.500 1.500L18.500 18.500M18.500 1.500L1.500 18.500" stroke="#3c3c3c" stroke-width="3" /></svg></i></div>
      <div class="look">
        <span class="dl">Look in:</span>
        <div class="combo dcombo"><svg class="fo" viewBox="0 0 52 52"><use href="#i-folder" /></svg><span>/home/sjoerdmurris/data/...NMT2_in_Aapie_brain/surf</span><svg class="ar" viewBox="0 0 18 10"><use href="#tri-down" /></svg></div>
        <svg class="nv n1" viewBox="0 0 38 38"><use href="#i-back" /></svg>
        <svg class="nv" viewBox="0 0 38 38"><g transform="matrix(-1 0 0 1 38 0)"><use href="#i-back" width="38" height="38" /></g></svg>
        <svg class="nv" viewBox="0 0 38 38"><g transform="rotate(90 19 19)"><use href="#i-back" width="38" height="38" /></g></svg>
        <svg class="nv" viewBox="0 0 38 38"><path d="M1 36V3H14L17 6H37V36Q19 38 1 36Z" fill="#cbb38e" stroke="#bda37c" stroke-width="2" /><path d="M1 36V16H14L19 11H37V36Z" fill="#e2cdb0" stroke="#cbb28d" stroke-width="1.500" /><circle cx="29" cy="9" r="8" fill="#2b60a8" /><path d="M29 4V14M24 9H34" stroke="#fff" stroke-width="2.500" /></svg>
        <svg class="nv" viewBox="0 0 38 38"><rect x="1.500" y="1.500" width="35" height="35" rx="4" fill="url(#gWB)" stroke="#1d1d1d" stroke-width="3" /><path d="M9 10H16V17H9ZM21 10H28V17H21ZM9 21H16V28H9ZM21 21H28V28H21Z" fill="#111" /></svg>
        <span class="nvon"><svg viewBox="0 0 38 38"><rect x="1.500" y="1.500" width="35" height="35" rx="4" fill="url(#gWB)" stroke="#1d1d1d" stroke-width="3" /><path d="M10 10.500H28M10 15H28M10 19.500H28M10 24H28" stroke="#222" stroke-width="2.600" /></svg></span>
      </div>
      <div class="body">
        <div class="places"><svg viewBox="0 0 52 52"><use href="#i-folder" /></svg><span>sjoerdmurris</span></div>
        <div class="list">
          <div class="lmain">
            <div class="table">
              <div class="lh"><span class="c1">Name</span><span class="c2">Size</span><span class="c3">Type</span></div>
              <div v-for="f in files" :key="f.name" class="fr"><svg viewBox="0 0 30 38"><use :href="f.text ? '#i-text' : '#i-file'" /></svg><span class="fn">{{ f.name }}</span><span class="fs">{{ f.size }}</span><span class="ft">{{ f.type }}</span></div>
            </div>
            <div class="vs"><i class="ve"><svg viewBox="0 0 18 10"><path d="M0 10H18L9 0Z" fill="currentColor" /></svg></i><i class="vthumb"></i><i class="vtrack"></i><i class="ve e2"><svg viewBox="0 0 18 10"><use href="#tri-down" /></svg></i></div>
          </div>
          <div class="hs"><i class="he"><svg viewBox="0 0 10 18"><path d="M10 0V18L0 9Z" fill="currentColor" /></svg></i><i class="hthumb"></i><i class="htrack"></i><i class="he"><svg viewBox="0 0 10 18"><path d="M0 0V18L10 9Z" fill="currentColor" /></svg></i><i class="corner"></i></div>
        </div>
        <div class="dots vt d"></div>
      </div>
      <div class="frow"><span class="dl">File <u>n</u>ame:</span><div class="field df">lh.full.patch.3d</div>
        <div class="btn dbtn save"><svg viewBox="0 0 28 38"><path d="M1 23H27V37H1Z" fill="#4a7fcc" stroke="#2f5b9c" stroke-width="2" /><path d="M8 29H20" stroke="#dfe8f4" stroke-width="3" /><path d="M11 2Q14 -1 17 2V16H25L14 28 3 16H11Z" fill="#f6f6f4" stroke="#84847e" stroke-width="1.800" /></svg><span><u>S</u>ave</span></div></div>
      <div class="frow"><span class="dl">Files of type:</span><div class="combo dt"><span>Patch files (*)</span><svg class="ar" viewBox="0 0 18 10"><use href="#tri-down" /></svg></div>
        <div class="btn dbtn cancel"><svg viewBox="0 0 36 36"><path d="M11 1H25L35 11V25L25 35H11L1 25V11Z" fill="#ddd" stroke="#8a8c86" stroke-width="2" /><path d="M12.500 5H23.500L31 12.500V23.500L23.500 31H12.500L5 23.500V12.500Z" fill="url(#gRed)" stroke="#a00" stroke-width="1" /></svg><span><u>C</u>ancel</span></div></div>
      <svg class="grip" viewBox="0 0 26 24"><g fill="#c4c4c4"><rect x="23" y="0" width="3" height="3" /><rect x="16" y="7" width="3" height="3" /><rect x="23" y="7" width="3" height="3" /><rect x="9" y="14" width="3" height="3" /><rect x="16" y="14" width="3" height="3" /><rect x="23" y="14" width="3" height="3" /><rect x="2" y="21" width="3" height="3" /><rect x="9" y="21" width="3" height="3" /><rect x="16" y="21" width="3" height="3" /><rect x="23" y="21" width="3" height="3" /></g></svg>
    </div>
  </div>
</template>

<style>
html, body { margin: 0; background: #a5a5a5; overflow: hidden; }
</style>
<style scoped>
* { box-sizing: border-box; }
.app { position: relative; zoom: 0.95411; width: 4293px; height: 2264px; overflow: hidden; background: #a5a5a5; color: #101010; font: 28.3px/34px "DejaVu Sans", sans-serif; white-space: pre; display: flex; flex-direction: column; }
.app svg { display: block; flex: none; }
.sheet { position: absolute; }
i { font-style: normal; display: block; flex: none; }
u { text-decoration-thickness: 2.2px; text-underline-offset: 4px; }
.strip { height: 22px; flex: none; background: #a3a3a3; border-bottom: 3.2px solid #8a8a8a; }
.menubar { height: 46px; flex: none; display: flex; align-items: center; padding-left: 17px; background: #a6a6a6; border-bottom: 2.2px solid #969696; }
.menubar span { flex: none; padding-top: 1px; }
.toolbar { height: 89px; flex: none; display: flex; align-items: center; padding: 4px 0 0 1px; background: linear-gradient(#aeaeae, #a3a3a3); border-bottom: 2.2px solid #868686; }
.tool { width: 78px; height: 74px; padding: 6px 9px; flex: none; }
.tool svg { width: 60px; height: 60px; }
.tool.on { width: 74px; margin: 0 2px; padding: 5px 4.800px; border: 2.2px solid #838383; border-radius: 6px; background: #989898; }
.tool.on svg { margin-top: -1px; }
.tsep { width: 2.2px; height: 45px; margin: 0 6.800px; background: linear-gradient(90deg, #919191 50%, #b8b8b8 50%); }
.main { flex: 1; display: flex; min-height: 0; }
.side { position: relative; width: 1006px; flex: none; }
.tree { margin: 14px 0 0 5px; width: 989px; height: 317px; border: 3.2px solid #868686; border-width: 3.2px 2.2px; background: #b1b1b1; padding-top: 1px; }
.trow { height: 35px; display: flex; align-items: center; }
.trow:first-child { padding-left: 15px; height: 36px; padding-top: 1px; }
.tarrow { width: 17px; height: 11px; margin-right: 22px; color: #3f3f3f; }
.trow.sel { background: #20608a; border: solid #35739b; border-width: 1.100px 0; height: 37px; padding-left: 102px; color: #b7b7b7; }
.trow.sel b { padding-top: 1px; }
.trow .cb { margin-right: 14px; }
.sw { width: 31px; height: 31px; background: #859a2c; margin-right: 15px; }
.cb { width: 33px; height: 33px; border: 2.2px solid #878787; background: #b1b1b1; box-shadow: inset 0 2px 0 #a3a3a3; }
.cb svg { width: 28.600px; height: 28.600px; }
.dots.hz { width: 38px; height: 3px; background: repeating-linear-gradient(90deg, #808080 0 3px, transparent 3px 7px); margin: 0 0 0 483px; }
.dots.t { margin-top: 2px; }
.dots.vt { position: absolute; left: 1001px; top: 1114px; width: 3px; height: 38px; background: repeating-linear-gradient(#808080 0 3px, transparent 3px 7px); }
.tools2 { display: flex; align-items: center; height: 73px; margin: 18px 0 0 26px; }
.tools2.first { margin-top: 15px; }
.tools2 .tool { width: 77.8px; }
.tools2 .tool.on { width: 74px; margin: 0 1.9px; height: 73px; }
.tools2 .tsep { margin: 0 6.800px; }
.form { margin-top: 16px; width: 994px; padding-left: 17px; display: grid; grid-template-rows: 70px 68px 74px 65px 64px 71px 66px 71px 65px 72px 66px 76px 64px 71px 67px 69px 60px 68px; }
.row { display: flex; align-items: center; min-width: 0; }
.row label { width: 228px; flex: none; padding-top: 2px; }
.row label.ind { padding-left: 84px; }
.field { flex: 1; height: 54px; border: 2.2px solid #7e7e7e; border-radius: 6px; background: #b1b1b1; box-shadow: inset 0 2px 0 #a5a5a5; display: flex; align-items: center; padding-left: 5px; }
.field.path { justify-content: flex-end; padding: 0 11px 0 0; overflow: hidden; }
.field.w164 { flex: none; width: 164px; }
.combo { flex: 1; height: 54px; border: 2.2px solid #7e7e7e; border-radius: 6px; background: linear-gradient(#b0b0b0, #a2a2a2); display: flex; align-items: center; justify-content: space-between; padding: 0 16px 0 10.500px; color: #101010; }
.combo.w668 { flex: none; width: 668px; }
.combo > svg, .ud svg { width: 18px; height: 10px; color: #3d3d3d; }
.btn { flex: none; height: 54px; border: 2.2px solid #7e7e7e; border-radius: 6px; background: linear-gradient(#b0b0b0, #a2a2a2); display: flex; align-items: center; justify-content: center; }
.btn.off { color: #878787; border-color: #8f8f8f; }
.btn.color { width: 65px; height: 56px; }
.btn.color i { width: 33px; height: 31px; }
.btn.end { margin-left: 16px; }
.grey { background: #454545; }
.yel { background: #b3b300; }
.w112 { width: 111.5px; }
.g6 > .btn + .btn { margin-left: 6.5px; }
.g15 > .btn + .btn { margin-left: 15px; }
.grow { flex: 1; }
.ml { margin-left: 15px; }
.cbt { margin-left: 12px; padding-top: 2px; }
.slider { position: relative; flex: none; height: 14px; border-radius: 4px; border: 2.2px solid #868686; background: linear-gradient(#8c8c8c, #979797); margin: 0 0 0 2px; }
.s1 { width: 590px; margin-right: 19px; }
.s2 { width: 566px; margin-right: 17px; }
.fill { position: absolute; left: -2.200px; top: -2.200px; height: 14px; border-radius: 4px; border: 2.2px solid #1f5577; background: #2b70a0; }
.s1 .fill { width: 570px; }
.s2 .fill { width: 280px; }
.knob { position: absolute; top: -10px; width: 31px; height: 30px; border-radius: 6px; border: 2.2px solid #828282; background: linear-gradient(#b0b0b0, #a6a6a6); }
.s1 .knob { left: 558px; }
.s2 .knob { left: 267px; }
.spin { flex: none; height: 52px; border: 2.2px solid #7e7e7e; border-radius: 6px; background: #b1b1b1; box-shadow: inset 0 2px 0 #a5a5a5; display: flex; align-items: stretch; justify-content: space-between; padding-left: 10.500px; }
.spin span { align-self: center; padding-top: 2px; }
.w138 { width: 138px; }
.w110 { width: 110px; }
.ud { width: 33px; border-left: 2.2px solid #868686; background: linear-gradient(#b0b0b0, #a2a2a2); border-radius: 0 5px 5px 0; display: flex; flex-direction: column; align-items: center; justify-content: center; gap: 9px; }
.ud .dim { color: #707070; }
.right { flex: 1; min-width: 0; display: flex; flex-direction: column; padding-top: 3px; }
.view { width: 3287px; height: 1790px; }
.dots.b { margin: 5px 0 4px 1650px; width: 41px; flex: none; }
.infos { flex: 1; display: flex; }
.info { border: 2.2px solid #868686; border-top-width: 3.2px; border-bottom: 0; background: #b1b1b1; }
.info.cursor { width: 1666px; margin-right: 5px; }
.info.mouse { flex: 1; border-right: 0; }
.ih { height: 45px; display: flex; background: linear-gradient(#aeaeae, #a2a2a2); border-bottom: 3.2px solid #7a7a7a; padding: 6.500px 0 0 6px; }
.ih span { width: 228px; }
.ih i { width: 2.2px; height: 41.800px; margin-top: -6.500px; background: #8b8b8b; }
.ir { height: 35.4px; display: flex; align-items: center; padding-left: 8.500px; padding-top: 1px; }
.ir.alt { background: #ababab; }
.ir span:first-child { width: 233.500px; flex: none; }
.ir .k { width: 190px; flex: none; }
.ih, .ir { color: #141414; }

.dialog { position: absolute; left: 1404px; top: 645px; width: 1527px; height: 1058px; border-radius: 27px 27px 0 0; background: #efefef; overflow: hidden; display: flex; flex-direction: column; color: #1a1a1a; }
.title { position: relative; height: 87px; flex: none; background: #ebebeb; border-bottom: 2.2px solid #bfbfbf; border-top: 2.2px solid #f8f8f8; display: flex; align-items: center; justify-content: center; color: #3c3c3c; font-size: 28.7px; }
.title b { padding-top: 4px; }
.close { position: absolute; right: 16px; top: 15px; width: 52px; height: 52px; border-radius: 50%; background: #dbdbdb; display: flex; align-items: center; justify-content: center; }
.close svg { width: 20px; height: 20px; }
.look { margin: 27px 27px 14px; height: 56px; display: flex; align-items: center; flex: none; }
.dl { width: 198px; flex: none; padding-top: 2px; }
.dialog .combo { border-color: #b4b4b4; background: linear-gradient(#fff, #ececec); color: #1a1a1a; flex: none; height: 56px; justify-content: flex-start; }
.dialog .dcombo { width: 865px; padding-left: 12px; font-size: 28.4px; }
.dcombo > .fo { width: 38px; height: 38px; margin-right: 6px; }
.dcombo > span { padding-top: 2px; }
.dialog .combo > .ar { margin-left: auto; color: #555; }
.nv { width: 38px; height: 38px; margin-right: 30px; margin-top: -3px; }
.n1 { margin-left: 24px; width: 38px; }
.nvon { width: 53px; height: 54px; margin: -2px 0 0 -7px; border: 2.2px solid #b8b8b8; border-radius: 6px; background: #dedede; padding: 6px; }
.nvon svg { width: 38px; height: 38px; }
.body { position: relative; margin: 0 27px; height: 706px; flex: none; display: flex; justify-content: space-between; }
.places { width: 267px; border: 2.2px solid #b8b8b8; background: #fff; display: flex; align-items: flex-start; padding: 5px 0 0 9px; overflow: hidden; }
.places svg { width: 52px; height: 52px; }
.places span { padding: 13px 0 0 16px; }
.dots.d { left: 271px; top: 337px; background: repeating-linear-gradient(#b4b4b4 0 3px, transparent 3px 7px); }
.list { width: 1196px; border: 2.2px solid #b8b8b8; display: flex; flex-direction: column; background: #fff; }
.lmain { flex: 1; min-height: 0; display: flex; }
.table { flex: 1; min-width: 0; overflow: hidden; }
.lh { height: 47.500px; display: flex; background: linear-gradient(#fff, #e9e9e9); border-bottom: 2.2px solid #bcbcbc; line-height: 48px; }
.lh span { flex: none; height: 45.500px; }
.c1 { width: 978px; padding-left: 46.500px; }
.c2 { width: 149px; border-left: 2.2px solid #c8c8c8; padding-left: 5.500px; }
.c3 { width: 100px; border-left: 2.2px solid #c8c8c8; padding-left: 5px; }
.fr { height: 42.4px; display: flex; align-items: center; padding-left: 13px; }
.fr svg { width: 29px; height: 38px; margin-top: 1px; }
.fn { width: 870px; padding-left: 18px; flex: none; }
.fs { width: 209px; flex: none; text-align: right; }
.ft { padding-left: 15px; flex: none; }
.fn, .fs, .ft { padding-top: 3px; }
.vs { width: 34px; border-left: 2.2px solid #bcbcbc; flex: none; display: flex; flex-direction: column; }
.ve { height: 33px; border-bottom: 2.2px solid #c0c0c0; background: linear-gradient(90deg, #fff, #eee); display: flex; align-items: center; justify-content: center; color: #555; }
.ve.e2 { border-bottom: 0; border-top: 2.2px solid #c0c0c0; }
.ve svg { width: 18px; height: 10px; }
.vthumb { height: 156px; background: linear-gradient(90deg, #fdfdfd, #ededed); border-bottom: 2.2px solid #b6b6b6; }
.vtrack { flex: 1; background: #e4e4e4; }
.hs { height: 34px; flex: none; border-top: 2.2px solid #bcbcbc; display: flex; }
.he { width: 33px; display: flex; align-items: center; justify-content: center; background: linear-gradient(#fff, #eee); color: #555; border-right: 2.2px solid #c0c0c0; }
.he svg { width: 10px; height: 18px; }
.hthumb { width: 825px; background: linear-gradient(#fdfdfd, #ededed); border-right: 2.2px solid #bcbcbc; }
.htrack { flex: 1; background: #e4e4e4; border-right: 2.2px solid #c0c0c0; }
.corner { width: 32px; background: #efefef; }
.frow { margin: 15px 27px 0; height: 56px; display: flex; align-items: flex-start; }
.frow > .dl { padding-top: 11px; }
.dialog .field { flex: none; width: 1072px; height: 54px; background: #fff; border-color: #b4b4b4; box-shadow: inset 0 2px 0 #ececec; padding-top: 1px; }
.dialog .dt { width: 1072px; height: 54px; padding-left: 9px; }
.dbtn { width: 187px; height: 56px; margin-left: 16px; border-color: #b4b4b4; background: linear-gradient(#fff, #ececec); }
.save { border-color: #2f76a6; background: linear-gradient(#fbfcfd, #d5dee5); }
.save svg { width: 28px; height: 38px; margin-right: 7px; }
.cancel svg { width: 35px; height: 36px; margin-right: 5px; }
.dbtn span { padding-top: 3px; }
.grip { position: absolute; right: 4px; bottom: 4px; width: 26px; height: 24px; }
</style>
